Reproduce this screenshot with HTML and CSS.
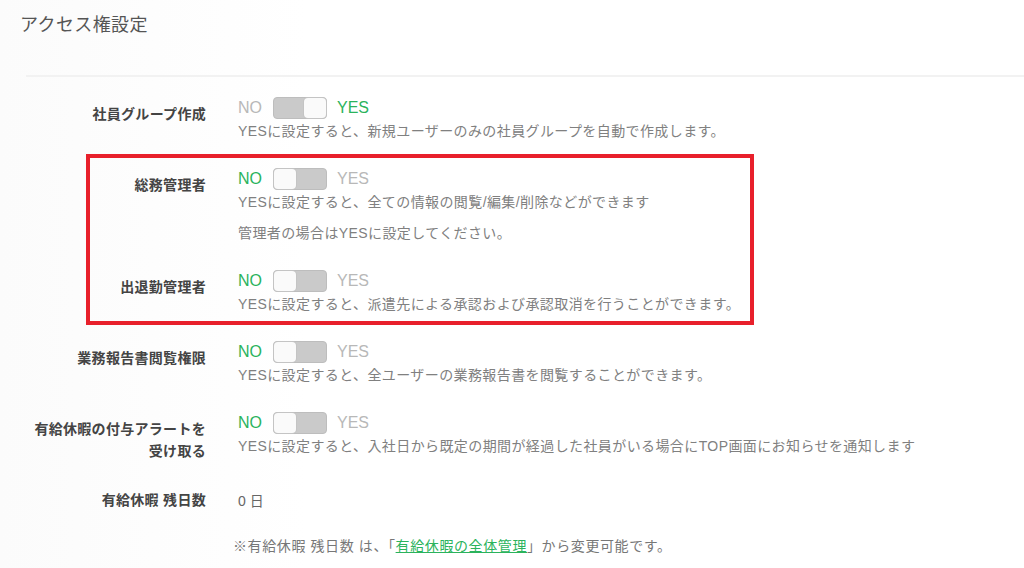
FILE: index.html
```html
<!DOCTYPE html>
<html lang="ja">
<head>
    <meta charset="UTF-8">
    <meta name="viewport" content="width=device-width, initial-scale=1.0">
    <title>アクセス権設定</title>
    <link rel="stylesheet" href="styles.css">
</head>
<body>
<div class="page">
    <h1 class="title">アクセス権設定</h1>
    <div class="divider"></div>

    <div class="settings">
        <div class="row">
            <div class="label">社員グループ作成</div>
            <div class="field">
                <div class="switch-line">
                    <span class="opt">NO</span>
                    <span class="switch on"><span class="knob"></span></span>
                    <span class="opt active">YES</span>
                </div>
                <p class="desc">YESに設定すると、新規ユーザーのみの社員グループを自動で作成します。</p>
            </div>
        </div>

        <div class="row">
            <div class="label">総務管理者</div>
            <div class="field">
                <div class="switch-line">
                    <span class="opt active">NO</span>
                    <span class="switch"><span class="knob"></span></span>
                    <span class="opt">YES</span>
                </div>
                <p class="desc">YESに設定すると、全ての情報の閲覧/編集/削除などができます</p>
                <p class="desc extra">管理者の場合はYESに設定してください。</p>
            </div>
        </div>

        <div class="row">
            <div class="label">出退勤管理者</div>
            <div class="field">
                <div class="switch-line">
                    <span class="opt active">NO</span>
                    <span class="switch"><span class="knob"></span></span>
                    <span class="opt">YES</span>
                </div>
                <p class="desc">YESに設定すると、派遣先による承認および承認取消を行うことができます。</p>
            </div>
        </div>

        <div class="row">
            <div class="label">業務報告書閲覧権限</div>
            <div class="field">
                <div class="switch-line">
                    <span class="opt active">NO</span>
                    <span class="switch"><span class="knob"></span></span>
                    <span class="opt">YES</span>
                </div>
                <p class="desc">YESに設定すると、全ユーザーの業務報告書を閲覧することができます。</p>
            </div>
        </div>

        <div class="row tall">
            <div class="label">有給休暇の付与アラートを<br>受け取る</div>
            <div class="field">
                <div class="switch-line">
                    <span class="opt active">NO</span>
                    <span class="switch"><span class="knob"></span></span>
                    <span class="opt">YES</span>
                </div>
                <p class="desc">YESに設定すると、入社日から既定の期間が経過した社員がいる場合にTOP画面にお知らせを通知します</p>
            </div>
        </div>

        <div class="row">
            <div class="label">有給休暇 残日数</div>
            <div class="field">
                <div class="value">0 日</div>
                <p class="desc note">※有給休暇 残日数 は、「<a href="#">有給休暇の全体管理</a>」から変更可能です。</p>
            </div>
        </div>
    </div>

    <div class="highlight"></div>
</div>
</body>
</html>
```

FILE: styles.css
```css
body {
    margin: 0;
    font-family: 'Liberation Sans', 'Noto Sans CJK JP', sans-serif;
    background: #fff;
    color: #444;
}

.page {
    position: relative;
    height: 568px;
    overflow: hidden;
    background: linear-gradient(90deg, #fbfbfb 0%, #fff 30%);
}

.title {
    margin: 0;
    padding: 13px 20px 0;
    font-size: 18px;
    line-height: 24px;
    font-weight: normal;
    letter-spacing: 0.4px;
    color: #555;
}

.divider {
    margin: 38px 0 0 26px;
    height: 2px;
    background: #f2f2f2;
}

.settings {
    padding-top: 20px;
}

.row {
    display: grid;
    grid-template-columns: 206px 1fr;
    column-gap: 32px;
    margin-bottom: 28px;
}

.row.tall {
    margin-bottom: 21px;
}

.label {
    text-align: right;
    font-size: 14px;
    line-height: 22px;
    font-weight: bold;
    letter-spacing: 0.3px;
    color: #444;
    padding-top: 6px;
}

.switch-line {
    display: flex;
    align-items: center;
    height: 22px;
}

.opt {
    font-size: 16px;
    color: #b8b8b8;
}

.opt.active {
    color: #2bb35c;
}

.switch {
    display: flex;
    width: 52px;
    height: 20px;
    margin: 0 10px 0 11px;
    border: 1px solid #bdbdbd;
    border-radius: 4px;
    background: #cacaca;
}

.switch.on {
    justify-content: flex-end;
}

.knob {
    width: 22px;
    height: 20px;
    border-radius: 4px;
    background: #fafafa;
    box-shadow: 0 0 0 1px #c4c4c4;
}

.desc {
    margin: 3px 0 0;
    font-size: 14px;
    line-height: 18px;
    letter-spacing: 0.4px;
    color: #808080;
}

.desc.extra {
    margin-top: 13px;
}

.value {
    padding-top: 7px;
    font-size: 14px;
    line-height: 22px;
    color: #666;
}

.desc.note {
    margin: 25px 0 0 -5px;
    letter-spacing: 0.6px;
    color: #777;
}

.note a {
    color: #2bb35c;
}

.highlight {
    position: absolute;
    left: 86px;
    top: 154px;
    width: 660px;
    height: 163px;
    border: 4px solid #e8202b;
}
```
